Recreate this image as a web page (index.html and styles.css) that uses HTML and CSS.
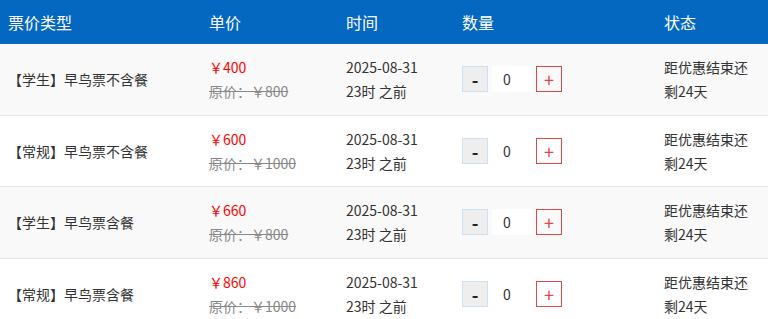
FILE: index.html
```html
<!DOCTYPE html>
<html lang="zh-CN">
<head>
<meta charset="utf-8">
<link rel="stylesheet" href="styles.css">
</head>
<body>
<div class="table">
  <div class="row head">
    <div class="cell">票价类型</div>
    <div class="cell">单价</div>
    <div class="cell">时间</div>
    <div class="cell">数量</div>
    <div class="cell">状态</div>
  </div>
  <div class="row odd">
    <div class="cell type">【学生】早鸟票不含餐</div>
    <div class="cell"><div class="price">￥400</div><div class="orig">原价：￥800</div></div>
    <div class="cell"><div>2025-08-31</div><div>23时 之前</div></div>
    <div class="cell"><div class="qty"><span class="btn minus">-</span><span class="num">0</span><span class="btn plus">+</span></div></div>
    <div class="cell status">距优惠结束还剩24天</div>
  </div>
  <div class="row even">
    <div class="cell type">【常规】早鸟票不含餐</div>
    <div class="cell"><div class="price">￥600</div><div class="orig">原价：￥1000</div></div>
    <div class="cell"><div>2025-08-31</div><div>23时 之前</div></div>
    <div class="cell"><div class="qty"><span class="btn minus">-</span><span class="num">0</span><span class="btn plus">+</span></div></div>
    <div class="cell status">距优惠结束还剩24天</div>
  </div>
  <div class="row odd">
    <div class="cell type">【学生】早鸟票含餐</div>
    <div class="cell"><div class="price">￥660</div><div class="orig">原价：￥800</div></div>
    <div class="cell"><div>2025-08-31</div><div>23时 之前</div></div>
    <div class="cell"><div class="qty"><span class="btn minus">-</span><span class="num">0</span><span class="btn plus">+</span></div></div>
    <div class="cell status">距优惠结束还剩24天</div>
  </div>
  <div class="row even">
    <div class="cell type">【常规】早鸟票含餐</div>
    <div class="cell"><div class="price">￥860</div><div class="orig">原价：￥1000</div></div>
    <div class="cell"><div>2025-08-31</div><div>23时 之前</div></div>
    <div class="cell"><div class="qty"><span class="btn minus">-</span><span class="num">0</span><span class="btn plus">+</span></div></div>
    <div class="cell status">距优惠结束还剩24天</div>
  </div>
</div>
</body>
</html>
```
FILE: styles.css
```css
html, body {
  margin: 0;
  padding: 0;
  background: #ffffff;
}
body {
  font-family: "Noto Sans CJK SC", "Noto Sans", sans-serif;
  color: #333333;
  font-size: 14px;
}
.table {
  width: 768px;
}
.row {
  display: grid;
  grid-template-columns: 201px 137px 116px 202px 112px;
  border-bottom: 1px solid #e6e6e6;
  box-sizing: border-box;
}
.row.head {
  background: #0467c0;
  color: #ffffff;
  font-size: 16px;
  height: 44px;
  align-items: center;
  border-bottom: none;
}
.row.odd { background: #f9f9f9; }
.row.even { background: #ffffff; }
.row.odd, .row.even {
  height: 71.5px;
  align-items: center;
}
.cell {
  padding: 0 8px;
  line-height: 24px;
}
.row.head .cell {
  line-height: 22px;
}
.type {
  padding-left: 8px;
}
.price {
  color: #ff0000;
}
.orig {
  color: #888888;
  text-decoration: line-through;
}
.status {
  padding-right: 12px;
}
.qty {
  display: flex;
  align-items: center;
}
.btn {
  width: 24px;
  height: 24px;
  box-sizing: content-box;
  display: flex;
  align-items: center;
  justify-content: center;
  line-height: 1;
}
.minus {
  background: #eeeeee;
  border: 1px solid #cfe0f6;
  color: #222;
  font-weight: bold;
  font-size: 18px;
}
.num {
  width: 40px;
  height: 26px;
  margin: 0 4px;
  background: #ffffff;
  line-height: 26px;
  padding-left: 11px;
  box-sizing: border-box;
  color: #333;
}
.plus {
  border: 1px solid #e04848;
  color: #e04848;
  font-size: 18px;
}
```
